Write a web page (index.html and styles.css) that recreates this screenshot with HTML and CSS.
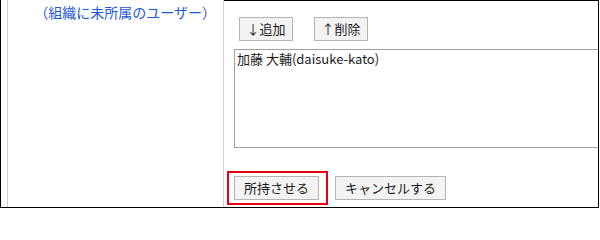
FILE: index.html
```html
<!DOCTYPE html>
<html lang="ja">
<head>
<meta charset="utf-8">
<link rel="stylesheet" href="styles.css">
</head>
<body>
<div class="frame">
  <div class="gutter"></div>
  <div class="label">
    <span class="label-text">（組織に未所属のユーザー）</span>
  </div>
  <div class="main">
    <div class="tools">
      <button class="btn">↓追加</button>
      <button class="btn">↑削除</button>
    </div>
    <div class="listbox">
      <div class="option">加藤 大輔(daisuke-kato)</div>
    </div>
    <div class="actions">
      <span class="highlight"><button class="btn">所持させる</button></span>
      <button class="btn btn-cancel">キャンセルする</button>
    </div>
  </div>
</div>
</body>
</html>
```

FILE: styles.css
```css
html, body {
  margin: 0;
  padding: 0;
  background: #fff;
}
body {
  width: 600px;
  height: 209px;
  overflow: hidden;
  font-family: "Noto Sans CJK JP", "Noto Sans", sans-serif;
  font-size: 13px;
  color: #222;
}
.frame {
  box-sizing: border-box;
  width: 599px;
  height: 208px;
  border-left: 1px solid #000;
  border-right: 1px solid #000;
  border-bottom: 1px solid #000;
  display: flex;
}
.gutter {
  width: 6px;
  flex: none;
}
.label {
  box-sizing: border-box;
  width: 217px;
  flex: none;
  border-left: 1px solid #d0d0d0;
  border-right: 1px solid #d0d0d0;
  padding: 3px 7px 0 0;
  text-align: right;
  white-space: nowrap;
}
.label-text {
  color: #1b58d6;
  font-size: 14px;
  line-height: 18px;
}
.main {
  flex: 1;
  min-width: 0;
  border-top: 1px solid #000;
  overflow: hidden;
  padding-top: 16px;
}
.tools {
  display: flex;
  gap: 21px;
  margin-left: 15px;
}
.btn {
  box-sizing: border-box;
  height: 24px;
  margin: 0;
  padding: 0 9px;
  border: 1px solid #b4b4b4;
  background: #f3f3f3;
  font-family: inherit;
  font-size: 13px;
  line-height: 22px;
  color: #1a1a1a;
  border-radius: 0;
}
.tools .btn {
  width: 54px;
  padding: 0;
}
.listbox {
  box-sizing: border-box;
  width: 420px;
  height: 99px;
  margin: 8px 0 0 10px;
  border: 1px solid #a0a0a0;
  padding: 1px 2px;
}
.option {
  line-height: 16px;
  white-space: nowrap;
  color: #1a1a1a;
}
.actions {
  display: flex;
  align-items: center;
  margin: 23px 0 0 3px;
}
.highlight {
  display: flex;
  border: 2px solid #e60012;
  padding: 3px 7px 3px 5px;
}
.btn-cancel {
  margin-left: 7px;
}
```
